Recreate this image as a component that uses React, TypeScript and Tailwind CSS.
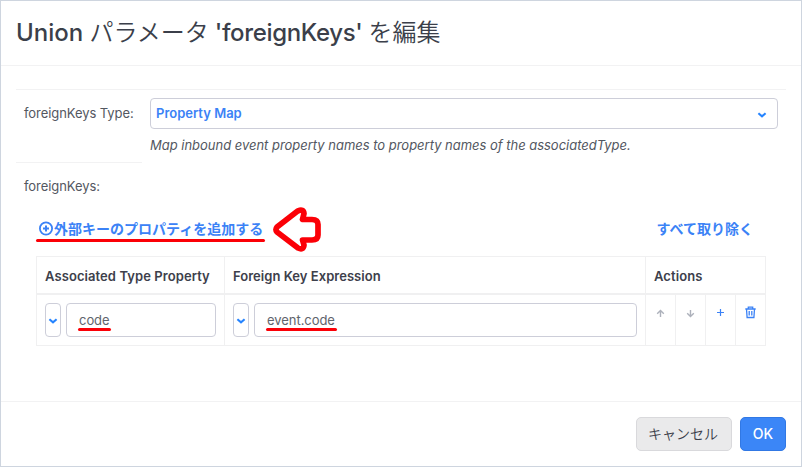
import type { ReactNode } from 'react';

function Chevron({ className = '' }: { className?: string }) {
  return (
    <svg width="10" height="8" viewBox="0 0 10 8" fill="none" className={`text-[#2684ff] ${className}`}>
      <path d="M1.4 2.2 5 5.3 8.6 2.2" stroke="currentColor" strokeWidth="2.1" />
    </svg>
  );
}

function RedLine({ className }: { className: string }) {
  return <span className={`absolute h-[3px] rounded-full bg-[#fb0007] ${className}`} />;
}

function PropertyField({ value, underline }: { value: string; underline: string }) {
  return (
    <div className="flex h-[34px] gap-[5px]">
      <button className="flex w-4 shrink-0 items-center justify-center rounded-[4px] border border-[#cdced9] pt-0.5">
        <Chevron className="shrink-0" />
      </button>
      <div className="relative flex flex-1 items-center rounded-[4px] border border-[#cdced9] pt-0.5 pl-3 text-[13px] tracking-[-0.05px] text-[#60646c]">
        <span>{value}</span>
        <RedLine className={underline} />
      </div>
    </div>
  );
}

function ActionCell({ children }: { children: ReactNode }) {
  return <div className="flex w-[30px] justify-center border-r border-[#f0f0f1] pt-[11px]">{children}</div>;
}

export default function App() {
  return (
    <div className="flex h-[467px] w-[802px] flex-col border border-[#ced5df] bg-white font-['Inter','Noto_Sans_CJK_JP',sans-serif] text-[13px] text-[#535761]">
      <header className="flex h-[65px] shrink-0 items-center border-b border-[#f2f2f3] pl-[15px]">
        <h1 className="whitespace-pre text-[24px] leading-[30px] font-medium text-[#3b3f4a]">
          <span className="tracking-[-0.02px]">Union </span>
          <span className="font-[350]">パラメータ</span>
          <span className="tracking-[-0.34px]"> 'foreignKeys' </span>
          <span className="font-[350]">を編集</span>
        </h1>
      </header>

      <main className="h-[336px] shrink-0 border-b border-[#f2f2f3] px-[15px] pt-[23px]">
        <div className="flex h-[73px] border-t border-[#f2f2f3]">
          <div className="h-[73px] w-[126px] shrink-0 border-b border-[#f2f2f3] pt-[13px] pl-2 leading-5 tracking-[-0.07px] whitespace-nowrap">
            foreignKeys Type:
          </div>
          <div className="flex-1 pt-2 pr-2 pl-2">
            <div className="flex h-[31px] items-center justify-between rounded-[4px] border border-[#cdced9] pr-2.5 pl-[5px] font-semibold text-[#3b82f6]">
              Property Map
              <Chevron className="mt-[3px]" />
            </div>
            <p className="mt-1.5 leading-5 tracking-[-0.02px] italic">
              Map inbound event property names to property names of the associatedType.
            </p>
          </div>
        </div>

        <div className="mt-[14px] pl-2 leading-5 tracking-[-0.07px]">foreignKeys:</div>

        <div className="mt-[22px] ml-5 flex h-5 w-[730px] items-center justify-between pr-[13px] pl-[3px] text-[14px] font-bold text-[#3b82f6]">
          <div className="relative flex items-center">
            <svg width="15" height="15" viewBox="0 0 15 15" fill="none" stroke="currentColor" className="shrink-0">
              <circle cx="7" cy="7.5" r="6.1" strokeWidth="1.8" />
              <path d="M4 7.5h6M7 4.5v6" strokeWidth="2" />
            </svg>
            <span className="whitespace-nowrap">外部キーのプロパティを追加する</span>
            <RedLine className="top-[21px] -left-[3px] w-[229px]" />
            <svg className="absolute -top-[12px] left-[233px]" width="50" height="48" viewBox="0 0 50 48" fill="white">
              <path
                d="M5 21 26 4.8Q31.5 2.5 32 7.5L30.5 13.5H40Q46 13.5 46 18.5V29Q46 34 40 34H30.5L32 39Q31.5 44.5 26 42L5 26Q3 23.5 5 21Z"
                stroke="#fb0007"
                strokeWidth="5.7"
                strokeLinejoin="round"
              />
            </svg>
          </div>
          <span>すべて取り除く</span>
        </div>

        <div className="mt-[18px] ml-5 w-[730px] border border-[#f0f0f1]">
          <div className="flex h-[38px] border-b-2 border-[#f0f0f1] font-semibold tracking-[0.08px] text-[#3d404b]">
            <div className="flex w-[188px] items-center border-r border-[#f0f0f1] pt-1 pl-2">Associated Type Property</div>
            <div className="flex w-[421px] items-center border-r border-[#f0f0f1] pt-1 pl-2 tracking-[0.03px]">Foreign Key Expression</div>
            <div className="flex flex-1 items-center pt-1 pl-2">Actions</div>
          </div>
          <div className="flex h-[50px]">
            <div className="w-[188px] border-r border-[#f0f0f1] px-2 pt-2">
              <PropertyField value="code" underline="top-[24px] left-[11px] w-[33px]" />
            </div>
            <div className="w-[421px] border-r border-[#f0f0f1] px-2 pt-2">
              <PropertyField value="event.code" underline="top-[24px] left-[11px] w-[71px]" />
            </div>
            <ActionCell>
              <svg width="9" height="14" viewBox="0 0 9 14" fill="none" stroke="#adb1bb" strokeWidth="1.4">
                <path d="M4.5 11V4.5M1.2 7.7l3.3-3.2 3.3 3.2" />
              </svg>
            </ActionCell>
            <ActionCell>
              <svg width="9" height="14" viewBox="0 0 9 14" fill="none" stroke="#adb1bb" strokeWidth="1.4">
                <path d="M4.5 4v6.5M1.2 7.3l3.3 3.2 3.3-3.2" />
              </svg>
            </ActionCell>
            <ActionCell>
              <svg width="9" height="14" viewBox="0 0 9 14" fill="none" stroke="#3b82f6" strokeWidth="1.2">
                <path d="M4.5 3v7M1 6.5h7" />
              </svg>
            </ActionCell>
            <div className="flex flex-1 justify-center pt-[11px]">
              <svg width="11" height="13" viewBox="0 0 11 13" fill="none" stroke="#3b82f6" strokeWidth="1.3">
                <path d="M.3 3h10.4M3.3 3V1.2h4.4V3M1.5 3l.6 8.5h6.8L9.5 3M4.2 5v4.6M6.8 5v4.6" />
              </svg>
            </div>
          </div>
        </div>
      </main>

      <footer className="flex flex-1 items-start justify-end gap-2 pt-[15px] pr-[15px] text-[14px]">
        <button className="h-[34px] w-24 rounded-[5px] border border-[#d9d9dc] bg-[#eaeaeb] pr-2 pb-0.5 pl-1.5 font-[350] text-[#3b3f4a]">
          キャンセル
        </button>
        <button className="h-[34px] w-[46px] rounded-[5px] border border-[#3178e4] bg-[#3b86f7] pb-px font-medium text-white">OK</button>
      </footer>
    </div>
  );
}
